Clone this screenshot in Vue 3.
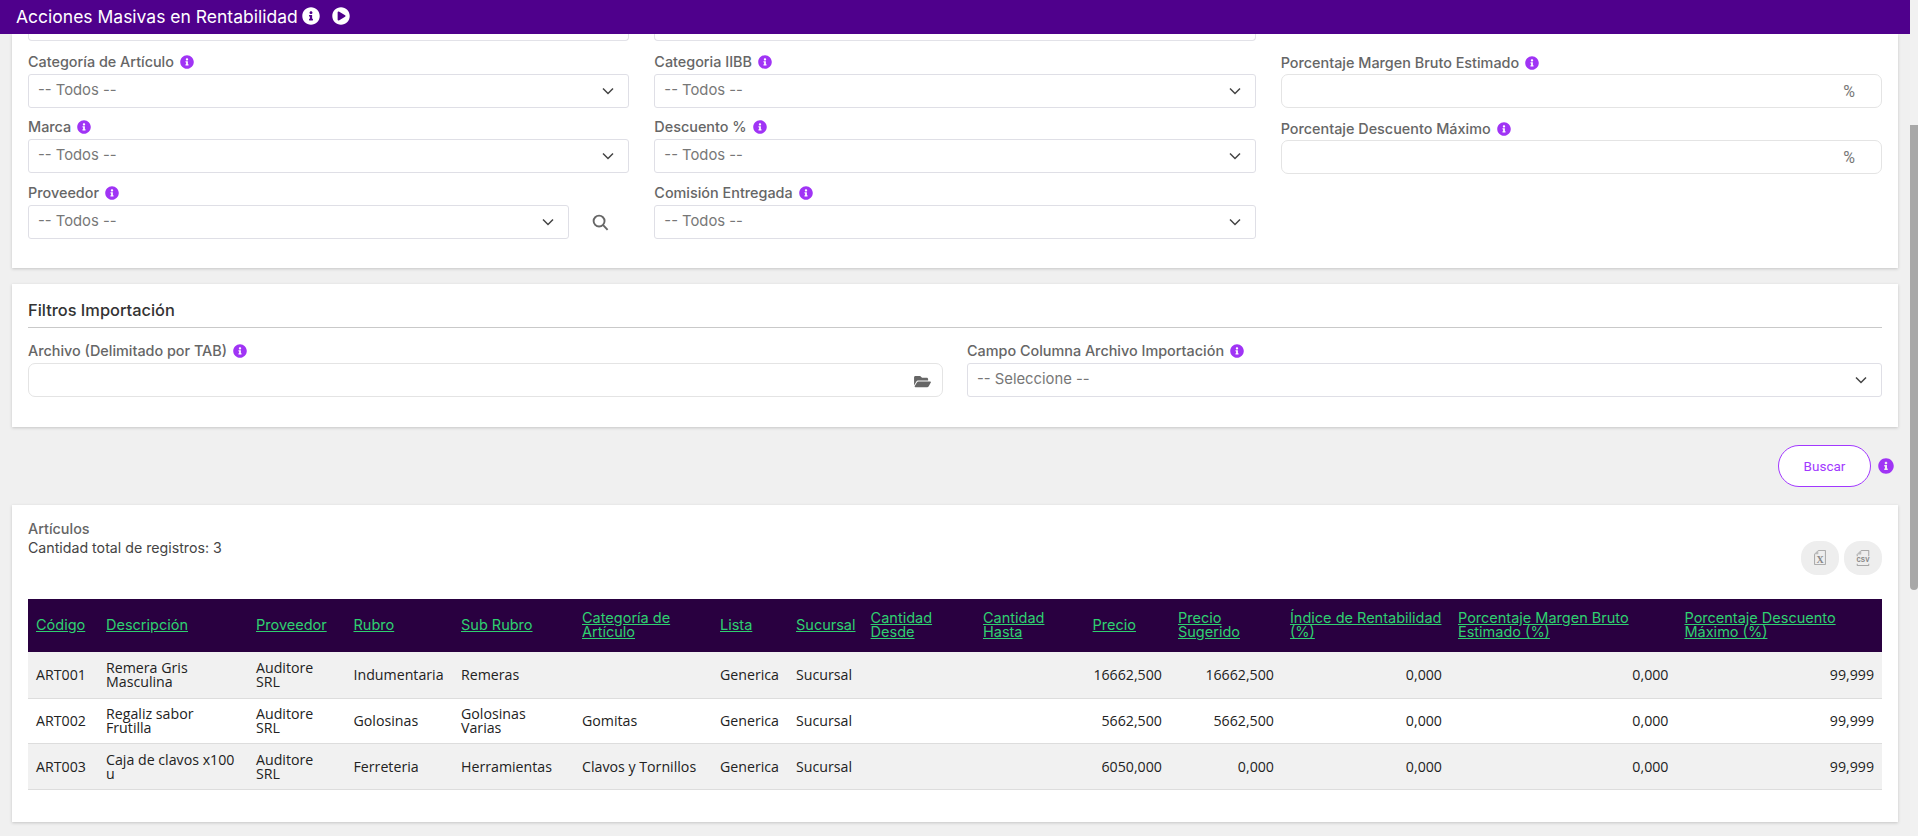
<script setup>
const INFO = 'M256 8C119 8 8 119 8 256s111 248 248 248 248-111 248-248S393 8 256 8zm0 110c23.196 0 42 18.804 42 42s-18.804 42-42 42-42-18.804-42-42 18.804-42 42-42zm56 254c0 6.627-5.373 12-12 12h-88c-6.627 0-12-5.373-12-12v-24c0-6.627 5.373-12 12-12h12v-64h-12c-6.627 0-12-5.373-12-12v-24c0-6.627 5.373-12 12-12h64c6.627 0 12 5.373 12 12v100h12c6.627 0 12 5.373 12 12v24z'
const col1 = ['Categoría de Artículo', 'Marca']
const col2 = ['Categoria IIBB', 'Descuento %', 'Comisión Entregada']
const col3 = ['Porcentaje Margen Bruto Estimado', 'Porcentaje Descuento Máximo']
const widths = [70, 150, 97.5, 107.5, 121, 138, 76, 74.6, 112.4, 109.6, 85.4, 112, 168, 226.5, 205.5]
const heads = ['Código', 'Descripción', 'Proveedor', 'Rubro', 'Sub Rubro', 'Categoría de Artículo', 'Lista', 'Sucursal', 'Cantidad Desde', 'Cantidad Hasta', 'Precio', 'Precio Sugerido', 'Índice de Rentabilidad (%)', 'Porcentaje Margen Bruto Estimado (%)', 'Porcentaje Descuento Máximo (%)']
const rows = [
  { h: 46.5, c: ['ART001', 'Remera Gris Masculina', 'Auditore SRL', 'Indumentaria', 'Remeras', '', 'Generica', 'Sucursal', '', '', '16662,500', '16662,500', '0,000', '0,000', '99,999'] },
  { h: 45, c: ['ART002', 'Regaliz sabor Frutilla', 'Auditore SRL', 'Golosinas', 'Golosinas Varias', 'Gomitas', 'Generica', 'Sucursal', '', '', '5662,500', '5662,500', '0,000', '0,000', '99,999'] },
  { h: 46, c: ['ART003', 'Caja de clavos x100 u', 'Auditore SRL', 'Ferreteria', 'Herramientas', 'Clavos y Tornillos', 'Generica', 'Sucursal', '', '', '6050,000', '0,000', '0,000', '0,000', '99,999'] }
]
const isNum = (i) => i >= 10
</script>

<template>
  <div class="app">
    <div class="content">
      <header class="topbar">
        <h1 class="title">Acciones Masivas en Rentabilidad</h1>
        <svg class="top-ico" viewBox="0 0 512 512"><path fill="#fff" :d="INFO" /></svg>
        <svg class="top-ico play" viewBox="0 0 512 512"><path fill="#fff" d="M256 8C119 8 8 119 8 256s111 248 248 248 248-111 248-248S393 8 256 8zm115.7 272l-176 101c-15.8 8.8-35.7-2.5-35.7-20.8V152c0-18.2 19.8-29.6 35.7-20.8l176 107c16.4 9.2 16.4 32.9 0 41.8z" /></svg>
      </header>
      <main class="main">
        <section class="card card-filters">
          <div class="cols">
            <div class="col">
              <div class="stub"></div>
              <div v-for="l in col1" :key="l" class="field">
                <label class="lbl">{{ l }}<svg class="info" viewBox="0 0 512 512"><path :d="INFO" /></svg></label>
                <div class="select-wrap">
                  <select class="ctl"><option>-- Todos --</option></select>
                  <svg class="chev" viewBox="0 0 12 8"><path d="M1 1.5l5 5 5-5" /></svg>
                </div>
              </div>
              <div class="field">
                <label class="lbl">Proveedor<svg class="info" viewBox="0 0 512 512"><path :d="INFO" /></svg></label>
                <div class="with-search">
                  <div class="select-wrap grow">
                    <select class="ctl"><option>-- Todos --</option></select>
                    <svg class="chev" viewBox="0 0 12 8"><path d="M1 1.5l5 5 5-5" /></svg>
                  </div>
                  <svg class="search" viewBox="0 0 18 18"><circle cx="7.5" cy="7.5" r="5.8" /><path d="M11.8 11.8L16.5 16.8" /></svg>
                </div>
              </div>
            </div>
            <div class="col">
              <div class="stub"></div>
              <div v-for="l in col2" :key="l" class="field">
                <label class="lbl">{{ l }}<svg class="info" viewBox="0 0 512 512"><path :d="INFO" /></svg></label>
                <div class="select-wrap">
                  <select class="ctl"><option>-- Todos --</option></select>
                  <svg class="chev" viewBox="0 0 12 8"><path d="M1 1.5l5 5 5-5" /></svg>
                </div>
              </div>
            </div>
            <div class="col col-pct">
              <div v-for="l in col3" :key="l" class="field field-pct">
                <label class="lbl lbl-pct">{{ l }}<svg class="info" viewBox="0 0 512 512"><path :d="INFO" /></svg></label>
                <div class="pct-wrap">
                  <input class="ctl round" type="text" />
                  <span class="pct">%</span>
                </div>
              </div>
            </div>
          </div>
        </section>

        <section class="card card-import">
          <h2 class="sec-title">Filtros Importación</h2>
          <div class="two">
            <div>
              <label class="lbl">Archivo (Delimitado por TAB)<svg class="info" viewBox="0 0 512 512"><path :d="INFO" /></svg></label>
              <div class="pct-wrap">
                <input class="ctl round" type="text" />
                <svg class="folder" viewBox="0 0 576 512"><path d="M572.694 292.093L500.27 416.248A63.997 63.997 0 0 1 444.989 448H45.025c-18.523 0-30.064-20.093-20.731-36.093l72.424-124.155A64 64 0 0 1 152 256h399.964c18.523 0 30.064 20.093 20.73 36.093zM152 224h328v-48c0-26.51-21.49-48-48-48H272l-64-64H48C21.49 64 0 85.49 0 112v278.046l69.077-118.418C86.214 242.25 117.989 224 152 224z" /></svg>
              </div>
            </div>
            <div>
              <label class="lbl">Campo Columna Archivo Importación<svg class="info" viewBox="0 0 512 512"><path :d="INFO" /></svg></label>
              <div class="select-wrap">
                <select class="ctl"><option>-- Seleccione --</option></select>
                <svg class="chev" viewBox="0 0 12 8"><path d="M1 1.5l5 5 5-5" /></svg>
              </div>
            </div>
          </div>
        </section>

        <div class="actions">
          <button class="buscar" type="button">Buscar</button>
          <svg class="info big" viewBox="0 0 512 512"><path :d="INFO" /></svg>
        </div>

        <section class="card card-table">
          <div class="tbl-top">
            <div>
              <div class="art">Artículos</div>
              <div class="count">Cantidad total de registros: 3</div>
            </div>
            <div class="tools">
              <button class="tool" type="button" aria-label="Excel">
                <svg viewBox="0 0 14 18" width="12" height="15"><path class="f" d="M5 .5h8.5v17H.5V5z" /><path class="c" d="M5 .5V5H.5z" /><text x="7.3" y="15" text-anchor="middle" class="x">X</text></svg>
              </button>
              <button class="tool" type="button" aria-label="CSV">
                <svg viewBox="0 0 18 18" width="16" height="16"><path class="f" d="M2.5 7V5L7 .5h8.500V7M2.500 15.500v2h13v-2" /><path class="c" d="M7 .5V5H2.500z" /><text x="9" y="13.800" text-anchor="middle" class="csv">CSV</text></svg>
              </button>
            </div>
          </div>
          <table class="tbl">
            <colgroup><col v-for="(w, i) in widths" :key="i" :style="{ width: w + 'px' }" /></colgroup>
            <thead>
              <tr><th v-for="h in heads" :key="h"><a class="lnk">{{ h }}</a></th></tr>
            </thead>
            <tbody>
              <tr v-for="r in rows" :key="r.c[0]" :style="{ height: r.h + 'px' }">
                <td v-for="(c, i) in r.c" :key="i" :class="{ num: isNum(i) }">{{ c }}</td>
              </tr>
            </tbody>
          </table>
        </section>
      </main>
    </div>
    <div class="sbar"><div class="thumb"></div></div>
  </div>
</template>

<style scoped>
.app { display: flex; height: 836px; overflow: hidden; background: #f0f0f0; font-family: "Inter", "Liberation Sans", sans-serif; color: #666; }
.content { flex: 1; min-width: 0; display: flex; flex-direction: column; }
.topbar { height: 34px; flex: none; background: #4f008c; display: flex; align-items: center; padding-left: 16px; position: relative; z-index: 1; }
.title { margin: 0; font-size: 17.500px; font-weight: 400; color: #fff; line-height: 34px; }
.top-ico { width: 18px; height: 18px; margin-left: 4px; margin-top: -2px; }
.top-ico.play { margin-left: 12px; }
.main { padding: 0 12px; }
.card { background: #fff; box-shadow: 0 1px 3px rgba(0,0,0,.18); }
.card-filters { padding: 0 16px 29px; }
.cols { display: grid; grid-template-columns: repeat(3, 1fr); gap: 25px; }
.col { display: flex; flex-direction: column; }
.col-pct { padding-top: 20px; }
.stub { box-sizing: border-box; height: 7.300px; margin-bottom: 11.700px; border: 1px solid #e2e2e8; border-top: 0; border-radius: 0 0 4px 4px; }
.field { margin-bottom: 10.500px; }
.field:last-child { margin-bottom: 0; }
.field-pct { margin-bottom: 12px; }
.lbl { display: flex; align-items: center; font-size: 14.400px; font-weight: 500; line-height: 18px; margin-bottom: 3px; color: #666; }
.lbl-pct { margin-bottom: 2px; }
.info { width: 14px; height: 14px; margin-left: 6px; fill: #a034f5; flex: none; }
.info.big { width: 16px; height: 16px; margin-left: 7px; }
.select-wrap, .pct-wrap { position: relative; }
.grow { flex: 1; }
.with-search { display: flex; align-items: center; padding-right: 60px; position: relative; }
.ctl { display: block; width: 100%; height: 34px; box-sizing: border-box; border: 1px solid #dfdfe6; border-radius: 3px; background: #fff; appearance: none; padding: 0 9px 2px; font: inherit; font-size: 14.800px; color: #777; outline: none; }
.round { border-radius: 7px; border-color: #e4e4e4; }
.chev { position: absolute; right: 15px; top: 13px; width: 12px; height: 8px; fill: none; stroke: #444; stroke-width: 1.500; pointer-events: none; }
.search { position: absolute; right: 20px; top: 9px; width: 17px; height: 17px; fill: none; stroke: #666; stroke-width: 2; }
.pct { position: absolute; right: 27px; top: 8px; font-size: 16px; color: #777; line-height: 20px; font-family: "Roboto", sans-serif; }
.folder { position: absolute; right: 12px; top: 11px; width: 17px; height: 15px; fill: #666; }
.card-import { margin-top: 16px; padding: 16px 16px 30px; }
.sec-title { margin: 0 0 14px; height: 27px; line-height: 20px; font-size: 16.400px; font-weight: 500; color: #333; border-bottom: 1px solid #c9c9c9; }
.two { display: grid; grid-template-columns: 1fr 1fr; gap: 24px; }
.actions { display: flex; justify-content: flex-end; align-items: center; margin: 18px 4px 18px 0; }
.buscar { width: 93px; height: 42px; border: 1px solid #a238ff; border-radius: 21px; background: #fff; color: #a238ff; font-family: "Roboto", sans-serif; font-size: 13.500px; padding: 0; }
.card-table { padding: 14px 16px 32px; }
.tbl-top { display: flex; justify-content: space-between; height: 56px; margin-bottom: 24px; box-sizing: border-box; padding-top: 1px; }
.art { font-size: 14.400px; font-weight: 500; line-height: 18px; color: #666; }
.count { font-size: 14.200px; line-height: 20px; color: #444; }
.tools { display: flex; gap: 5px; align-items: flex-end; }
.tool { width: 38px; height: 34px; border: 0; border-radius: 16px; background: #eee; display: flex; align-items: center; justify-content: center; padding: 0; }
.f { fill: none; stroke: #999; stroke-width: 1; }
.c { fill: #bbb; }
.x { font: 700 12px "Liberation Serif", serif; fill: #888; }
.csv { font: 700 8px "Liberation Mono", monospace; fill: #888; }
.tbl { width: 100%; table-layout: fixed; border-collapse: collapse; font-family: "Open Sans", sans-serif; font-size: 14.200px; line-height: 14px; color: #222; }
.tbl th { height: 53px; background: #290040; padding: 0 8px; text-align: left; font-family: "Inter", sans-serif; font-weight: 400; font-size: 14.500px; line-height: 14px; }
.lnk { color: #2fd070; text-decoration: underline; }
.tbl td { padding: 1px 8px 0; border-bottom: 1px solid #ddd; vertical-align: middle; }
.tbl tbody tr:nth-child(odd) { background: #f1f1f1; }
.num { text-align: right; }
.sbar { width: 8px; flex: none; background: #f1f1f1; padding-top: 125px; box-sizing: border-box; }
.thumb { height: 465px; background: #a8a8a8; border-radius: 0 0 4px 4px; }
</style>

<style>
html, body { overflow: hidden; }
</style>
